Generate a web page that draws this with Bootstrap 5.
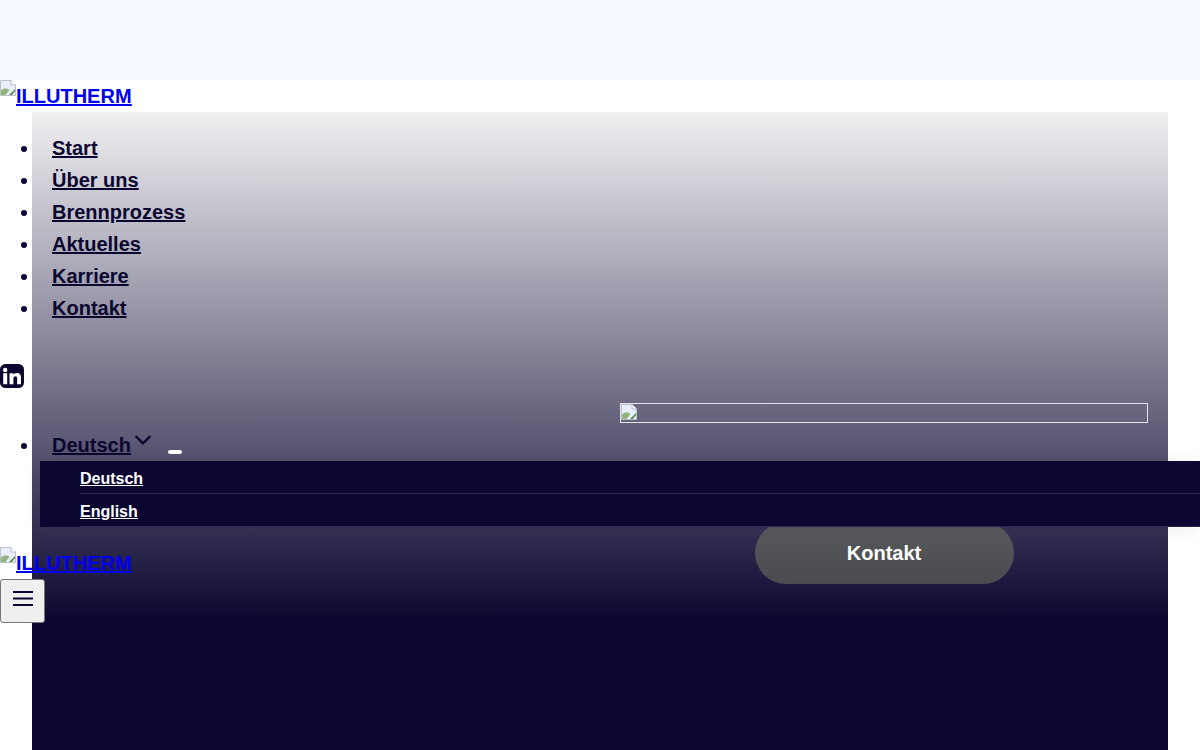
<!DOCTYPE html>
<html lang="de">
<head>
<meta charset="utf-8">
<title>ILLUTHERM</title>
<link href="https://cdn.jsdelivr.net/npm/bootstrap@5.3.0/dist/css/bootstrap.min.css" rel="stylesheet">
<style>
html, body { height: 750px; overflow: hidden; }
body { font-family: "Liberation Sans", Arial, sans-serif; font-size: 16px; line-height: 1.6; color: #0b0730; background: #fff; }
.top-band { height: 80px; background: #f6f9ff; }
.logo-link { display: block; height: 32px; font-size: 20px; font-weight: 700; color: #0000ee; white-space: nowrap; }
.logo-link svg { vertical-align: 7px; }
.logo-link span { text-decoration: underline; }
.stage { display: grid; height: 638px; }
.stage > * { grid-area: 1 / 1; min-width: 0; }
.hero-panel { margin: 0 32px; padding: 291px 20px 0 0; background: linear-gradient(180deg, #f0f0f2 0, #0b0730 508px); }
.hero-col { width: 528px; }
.hero-img { height: 20px; border: 1px solid #e4e4ea; line-height: 0; }
.hero-btn { width: 259px; height: 62px; margin-top: 99px; border-radius: 31px; font-size: 20px; font-weight: 700; color: #fff; background: linear-gradient(180deg, #585b5d, #494b4e); }
.main-nav { margin: 20px 0 0; padding-left: 40px; }
.main-nav li, .lang-list > li { height: 32px; font-size: 20px; font-weight: 700; }
.main-nav a, .lang-list > li > a { margin-left: 12px; color: #0b0730; }
.social-link { display: block; width: 24px; height: 24px; margin-top: 40px; line-height: 0; }
.lang-list { position: relative; margin: 41px 0 0; padding-left: 40px; height: 32px; }
.lang-list > li { position: relative; }
.chev { margin-left: 3px; vertical-align: 3px; }
.pill-mark { display: inline-block; width: 14px; height: 4px; margin-left: 16px; border-radius: 2px; background: #fff; vertical-align: -2px; }
.lang-menu { position: absolute; top: 32px; left: 0; width: 1160px; margin: 0; padding: 0 0 0 40px; list-style: none; background: #0b0730; box-shadow: 0 2px 16px rgba(0,0,0,.08); z-index: 5; }
.lang-menu li { height: 33px; font-size: 16px; line-height: 35px; border-bottom: 1px solid #2c2850; }
.lang-menu a { color: #fff; }
.overlay-col { position: relative; }
.logo-two { margin-top: 86px; }
.menu-toggle { display: block; width: 45px; height: 44px; padding: 0; background: #efefef; border: 1px solid #767676; border-radius: 3px; line-height: 0; }
</style>
</head>
<body>
<div class="top-band"></div>
<a class="logo-link" href="#"><svg width="16" height="16" viewBox="0 0 16 16" aria-hidden="true"><path d="M.5.5H11L15.500 5V15.500H.5Z" fill="#e8effa" stroke="#b9c0c8"/><path d="M11 .5V5H15.500" fill="#fff" stroke="#b9c0c8"/><path d="M1 14V10.500C4 8 7 8 9.500 10L5.500 15H1Z" fill="#8fb57d"/><path d="M9 15 15 9V11L12 15Z" fill="#5c8a4a"/></svg><span>ILLUTHERM</span></a>
<div class="stage">
  <div class="hero-panel d-flex justify-content-end">
    <div class="hero-col d-flex flex-column align-items-center">
      <div class="hero-img align-self-stretch"><svg width="16" height="16" viewBox="0 0 16 16" aria-hidden="true"><path d="M.5.5H11L15.500 5V15.500H.5Z" fill="#e8effa" stroke="#b9c0c8"/><path d="M11 .5V5H15.500" fill="#fff" stroke="#b9c0c8"/><path d="M1 14V10.500C4 8 7 8 9.500 10L5.500 15H1Z" fill="#8fb57d"/><path d="M9 15 15 9V11L12 15Z" fill="#5c8a4a"/></svg></div>
      <div class="hero-btn d-flex align-items-center justify-content-center">Kontakt</div>
    </div>
  </div>
  <div class="overlay-col">
    <ul class="main-nav">
      <li><a href="#">Start</a></li>
      <li><a href="#">Über uns</a></li>
      <li><a href="#">Brennprozess</a></li>
      <li><a href="#">Aktuelles</a></li>
      <li><a href="#">Karriere</a></li>
      <li><a href="#">Kontakt</a></li>
    </ul>
    <a class="social-link" href="#" aria-label="LinkedIn"><svg width="24" height="24" viewBox="0 0 24 24" aria-hidden="true"><rect width="24" height="24" rx="5.500" fill="#0b0730"/><circle cx="5.200" cy="6" r="2.200" fill="#fff"/><rect x="3.200" y="9.200" width="4" height="11" fill="#fff"/><path d="M9.500 9.200h3.800v1.600c.7-1.200 2-1.900 3.600-1.900 3 0 4.100 1.800 4.100 4.800v6.500h-3.900v-5.700c0-1.400-.4-2.300-1.700-2.300s-2 1-2 2.400v5.600H9.500Z" fill="#fff"/></svg></a>
    <ul class="lang-list">
      <li>
        <a href="#">Deutsch</a><svg class="chev" width="18" height="18" viewBox="0 0 16 16" aria-hidden="true"><path d="M2 5l6 6 6-6" fill="none" stroke="#0b0730" stroke-width="2" stroke-linecap="round" stroke-linejoin="round"/></svg><span class="pill-mark"></span>
        <ul class="lang-menu">
          <li><a href="#">Deutsch</a></li>
          <li><a href="#">English</a></li>
        </ul>
      </li>
    </ul>
    <a class="logo-link logo-two" href="#"><svg width="16" height="16" viewBox="0 0 16 16" aria-hidden="true"><path d="M.5.5H11L15.500 5V15.500H.5Z" fill="#e8effa" stroke="#b9c0c8"/><path d="M11 .5V5H15.500" fill="#fff" stroke="#b9c0c8"/><path d="M1 14V10.500C4 8 7 8 9.500 10L5.500 15H1Z" fill="#8fb57d"/><path d="M9 15 15 9V11L12 15Z" fill="#5c8a4a"/></svg><span>ILLUTHERM</span></a>
    <button class="menu-toggle d-flex align-items-center justify-content-center" type="button" aria-label="Menü"><svg width="24" height="24" viewBox="0 0 24 24" aria-hidden="true"><path d="M2 3h20M2 9.500h20M2 16h20" fill="none" stroke="#0b0730" stroke-width="2"/></svg></button>
  </div>
</div>
<script src="https://cdn.jsdelivr.net/npm/bootstrap@5.3.0/dist/js/bootstrap.bundle.min.js"></script>
</body>
</html>
